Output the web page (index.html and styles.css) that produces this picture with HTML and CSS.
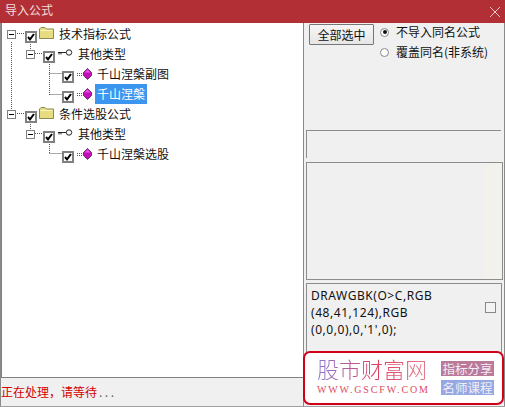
FILE: index.html
```html
<!DOCTYPE html>
<html lang="zh">
<head>
<meta charset="utf-8">
<title>导入公式</title>
<link rel="stylesheet" href="styles.css">
</head>
<body>
<svg class="defs" width="0" height="0">
  <symbol id="check" viewBox="0 0 8 8"><path d="M1 4l2 2.4L7 1" fill="none" stroke="#000" stroke-width="2"/></symbol>
  <symbol id="folder" viewBox="0 0 15 12"><path d="M.5 11.5V2L2 .5h4L7.5 2h7v9.5z" fill="#e8dc80" stroke="#8a8a50"/><path d="M1.5 3.5h12" stroke="#fbf6c0"/></symbol>
  <symbol id="key" viewBox="0 0 15 7"><circle cx="11" cy="3.5" r="2.7" fill="#fff" stroke="#222"/><path d="M0 3.5h8M1 3.5v2M3 3.5v2" stroke="#222" fill="none"/></symbol>
  <symbol id="gem" viewBox="0 0 15 12"><path d="M0 5.500h5M0 7.500h5" stroke="#555" stroke-dasharray="1 1"/><path d="M10.500 .5l4 4v3l-4 4-4-4v-3z" fill="#c010b8" stroke="#601060" stroke-width=".8"/><path d="M10.500 1.500L7.500 4.500h6z" fill="#e850e0"/></symbol>
  <symbol id="minus" viewBox="0 0 9 9"><rect x=".5" y=".5" width="8" height="8" fill="#fff" stroke="#808080"/><path d="M2 4.500h5" stroke="#000"/></symbol>
</svg>
<div class="window">
  <header class="titlebar">
    <span>导入公式</span>
    <svg class="close" width="10" height="10" viewBox="0 0 10 10"><path d="M0 0l10 10M10 0L0 10" stroke="#e8c8c8" fill="none"/></svg>
  </header>
  <main class="content">
    <section class="left">
      <div class="tree">
        <svg class="lines" width="80" height="170"><path d="M11.500 19v76M15 10.500h10M30.500 21v7M35 30.500h8M49.500 39v33M49.500 50.500h13M49.500 71.500h13M15 90.500h10M30.500 101v7M35 110.500h8M49.500 119v12M49.500 130.500h13" stroke="#555" stroke-dasharray="1 1" fill="none"/></svg>
        <div class="row l0"><svg class="exp"><use href="#minus"/></svg><span class="cb"><svg><use href="#check"/></svg></span><svg class="ico-folder"><use href="#folder"/></svg><span class="label">技术指标公式</span></div>
        <div class="row l1"><svg class="exp"><use href="#minus"/></svg><span class="cb"><svg><use href="#check"/></svg></span><svg class="ico-key"><use href="#key"/></svg><span class="label">其他类型</span></div>
        <div class="row l2"><span class="cb"><svg><use href="#check"/></svg></span><svg class="ico-gem"><use href="#gem"/></svg><span class="label">千山涅槃副图</span></div>
        <div class="row l2"><span class="cb"><svg><use href="#check"/></svg></span><svg class="ico-gem"><use href="#gem"/></svg><span class="label selected">千山涅槃</span></div>
        <div class="row l0"><svg class="exp"><use href="#minus"/></svg><span class="cb"><svg><use href="#check"/></svg></span><svg class="ico-folder"><use href="#folder"/></svg><span class="label">条件选股公式</span></div>
        <div class="row l1"><svg class="exp"><use href="#minus"/></svg><span class="cb"><svg><use href="#check"/></svg></span><svg class="ico-key"><use href="#key"/></svg><span class="label">其他类型</span></div>
        <div class="row l2"><span class="cb"><svg><use href="#check"/></svg></span><svg class="ico-gem"><use href="#gem"/></svg><span class="label">千山涅槃选股</span></div>
      </div>
      <footer class="status">正在处理，请等待<span class="dots">...</span></footer>
    </section>
    <aside class="right">
      <div class="controls">
        <button class="btn" type="button">全部选中</button>
        <div class="radios">
          <div class="radio-row"><span class="radio on"></span>不导入同名公式</div>
          <div class="radio-row"><span class="radio"></span>覆盖同名(非系统)</div>
        </div>
      </div>
      <div class="panel-a"></div>
      <div class="panel-b"><div class="strip"></div></div>
      <div class="panel-c">
        <p class="code">DRAWGBK(O&gt;C,RGB<br>(48,41,124),RGB<br>(0,0,0),0,'1',0);</p>
        <span class="mini-cb"></span>
      </div>
    </aside>
  </main>
  <div class="ad">
    <div class="brand">
      <div class="brand-name">股市财富网</div>
      <div class="brand-url">WWW.GSCFW.COM</div>
    </div>
    <div class="tags">
      <span class="tag pink">指标分享</span>
      <span class="tag blue">名师课程</span>
    </div>
  </div>
</div>
</body>
</html>
```
FILE: styles.css
```css
* { box-sizing: border-box; }
html, body { margin: 0; padding: 0; }
body {
  width: 505px;
  height: 407px;
  overflow: hidden;
  font: 12px/1 "Noto Sans CJK SC", "Liberation Sans", sans-serif;
  color: #111;
  background: #f0f0f0;
}
.defs { position: absolute; }
.window {
  position: relative;
  width: 505px;
  height: 407px;
  display: flex;
  flex-direction: column;
  border-bottom: 1px solid #a0a0a0;
}
.titlebar {
  height: 23px;
  flex: none;
  background: #b23035;
  color: #f2dede;
  display: flex;
  align-items: center;
  justify-content: space-between;
  padding: 0 5px 3px 5px;
}
.close { margin-top: 3px; }
.content {
  flex: 1;
  display: flex;
  min-height: 0;
  border-left: 1px solid #8a8a8a;
  border-right: 1px solid #8a8a8a;
}
.left {
  width: 302px;
  display: flex;
  flex-direction: column;
}
.tree {
  position: relative;
  flex: none;
  height: 355px;
  background: #fff;
  border-left: 1px solid #808080;
  border-bottom: 1px solid #808080;
  padding-top: 1px;
}
.lines { position: absolute; left: -2px; top: 0; }
.row {
  position: relative;
  height: 20px;
  display: flex;
  align-items: center;
}
.l0 { padding-left: 5px; }
.l1 { padding-left: 24px; }
.l2 { padding-left: 60px; }
.exp { width: 9px; height: 9px; flex: none; margin-right: 9px; }
.l1 .exp { margin-right: 8px; }
.cb {
  width: 12px;
  height: 12px;
  flex: none;
  margin-top: 6px;
  border: 2px solid #808080;
  background: #fff;
  display: flex;
}
.cb svg { width: 8px; height: 8px; }
.ico-folder { width: 15px; height: 12px; flex: none; margin: -3px 5px 0 2px; }
.ico-key { width: 15px; height: 7px; flex: none; margin: -3px 5px 0 3px; }
.ico-gem { width: 15px; height: 12px; flex: none; margin: -1px 5px 0 3px; }
.label { white-space: nowrap; }
.selected {
  background: #3c96f0;
  color: #fff;
  width: 52px;
  height: 20px;
  line-height: 20px;
  text-align: right;
  padding-right: 2px;
  margin-left: -2px;
}
.status {
  flex: 1;
  padding: 8px 0 0 0;
  color: #d40000;
  white-space: nowrap;
}
.dots { color: #666; letter-spacing: 2.5px; margin-left: 2px; }
.right {
  flex: 1;
  border-left: 1px solid #8a8a8a;
  padding: 1px 0 0 2px;
  display: flex;
  flex-direction: column;
}
.controls { display: flex; height: 106px; padding-left: 3px; }
.btn {
  width: 65px;
  height: 21px;
  flex: none;
  padding: 0;
  font: inherit;
  color: #111;
  background: linear-gradient(#f6f6f6, #e6e6e6);
  border: 1px solid #777;
  border-radius: 1px;
}
.radios { margin: -2px 0 0 6px; }
.radio-row { display: flex; align-items: center; height: 20px; white-space: nowrap; }
.radio {
  width: 9px;
  height: 9px;
  margin-right: 7px;
  border-radius: 50%;
  background: #fff;
  border: 1px solid #888;
  position: relative;
}
.radio.on::after {
  content: "";
  position: absolute;
  left: 1.500px;
  top: 1.500px;
  width: 4px;
  height: 4px;
  border-radius: 50%;
  background: #111;
}
.panel-a {
  width: 195px;
  height: 28px;
  flex: none;
  border-top: 1px solid #8c8c8c;
  border-left: 1px solid #8c8c8c;
}
.panel-b {
  width: 197px;
  height: 118px;
  flex: none;
  margin-top: 4px;
  border: 1px solid #8c8c8c;
  display: flex;
  justify-content: flex-end;
}
.strip { width: 19px; background: #f2f1ec; }
.panel-c {
  width: 196px;
  height: 80px;
  flex: none;
  margin-top: 3px;
  border: 1px solid #8c8c8c;
  padding: 3px 0 0 4px;
  position: relative;
}
.code {
  margin: 0;
  font: 12px/17px "Noto Sans", "Liberation Sans", sans-serif;
  letter-spacing: .55px;
  color: #111;
}
.mini-cb {
  position: absolute;
  left: 178px;
  top: 18px;
  width: 11px;
  height: 11px;
  background: #f4f4f4;
  border: 1px solid #888;
}
.ad {
  position: absolute;
  left: 303px;
  top: 351px;
  width: 201px;
  height: 54px;
  background: #fff;
  border: 2px solid #d00018;
  border-radius: 7px;
  display: flex;
  padding: 3px 8px 0 12px;
  justify-content: space-between;
}
.brand-name {
  font: 300 22px/24px "Noto Sans CJK SC", serif;
  background: linear-gradient(90deg, #8a78d8, #e04060 55%, #e08090);
  -webkit-background-clip: text;
  background-clip: text;
  color: transparent;
  white-space: nowrap;
}
.brand-url {
  font: 10px/12px "Liberation Serif", serif;
  letter-spacing: 1.85px;
  color: #e04a60;
  margin-top: 4px;
  white-space: nowrap;
}
.tags { display: flex; flex-direction: column; gap: 4px; padding-top: 5px; }
.tag {
  width: 53px;
  height: 15px;
  color: #f4eef4;
  font: 12.500px/15px "Noto Sans CJK SC", serif;
  text-align: center;
  white-space: nowrap;
}
.pink { background: #b97a9c; }
.blue { background: #94a8e4; }
```
